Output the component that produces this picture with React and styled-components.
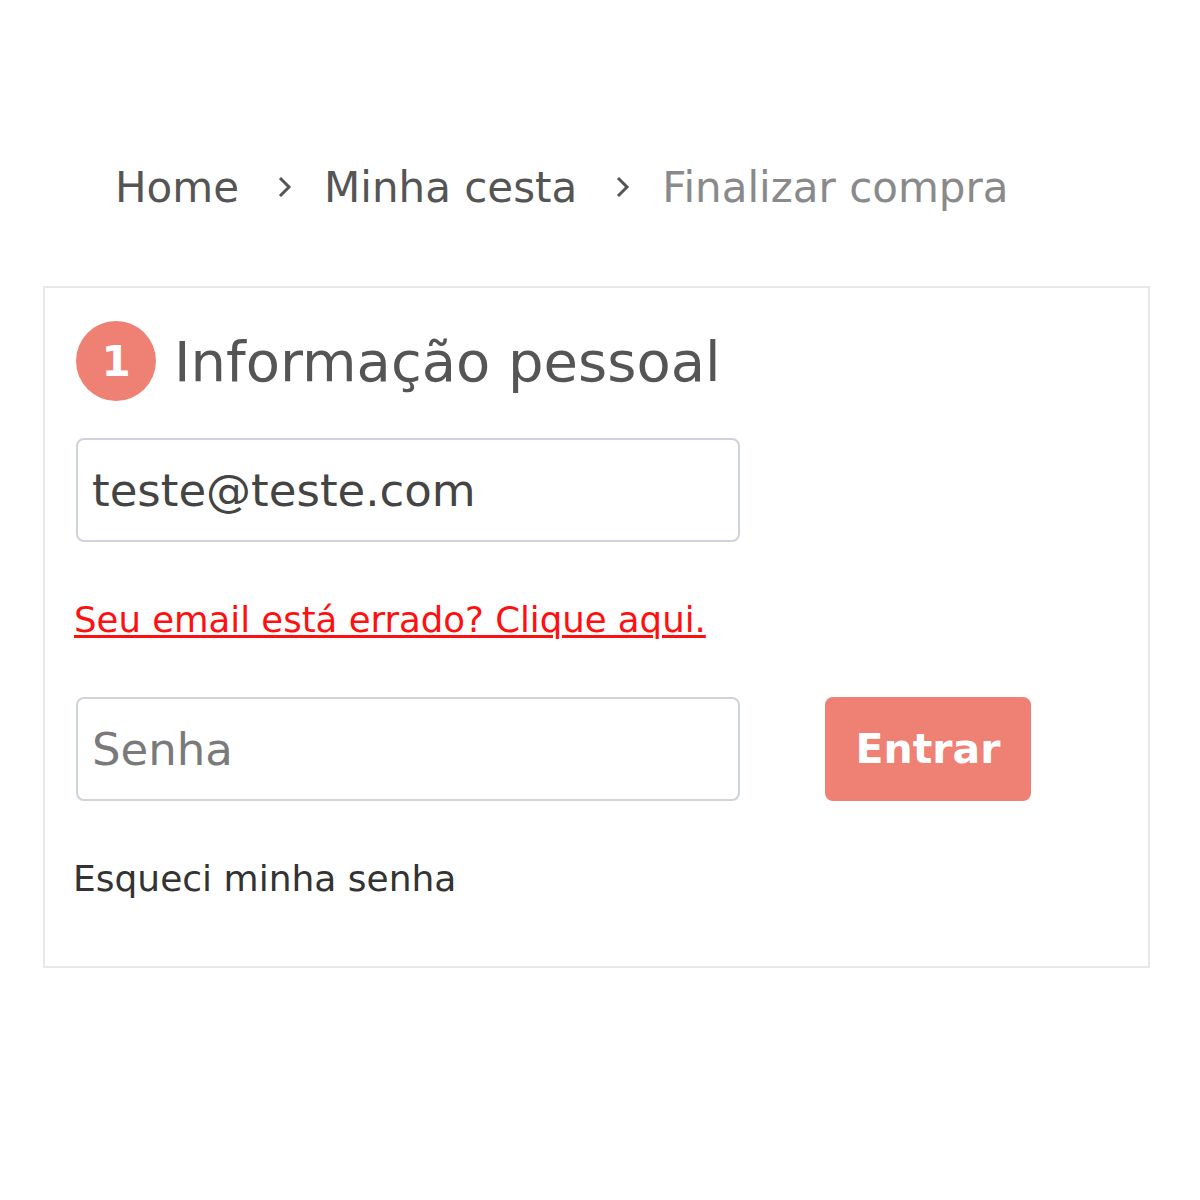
import styled, { createGlobalStyle } from "styled-components"

const GlobalStyle = createGlobalStyle`
        body {
                margin: 0;
                background: #fff;
                font-family: "DejaVu Sans", "Noto Sans", sans-serif;
        }
`

const Page = styled.div`
        width: 1200px;
        padding-top: 160px;
`

const Breadcrumb = styled.nav`
        display: flex;
        align-items: center;
        padding-left: 115px;
        height: 54px;
        font-size: 42px;
        color: #555;
`

const Crumb = styled.span`
        color: ${props => props.current ? '#8a8a8a' : '#555'};
`

const Sep = styled.span`
        display: flex;
        align-items: center;
        margin: 0 31px 0 38px;
`

const Card = styled.section`
        margin: 72px 0 0 43px;
        width: 1107px;
        box-sizing: border-box;
        border: 2px solid #e8e8e8;
        padding: 33px 32px 65px 31px;
`

const TitleRow = styled.div`
        display: flex;
        align-items: center;
        gap: 18px;
`

const Step = styled.div`
        width: 80px;
        height: 80px;
        border-radius: 50%;
        background: #ef8074;
        color: #fff;
        display: flex;
        align-items: center;
        justify-content: center;
        font-size: 42px;
        font-weight: bold;
`

const Title = styled.h2`
        margin: 0;
        font-size: 56px;
        font-weight: 500;
        color: #555;
`

const Field = styled.input`
        width: 664px;
        height: 104px;
        box-sizing: border-box;
        border: 2px solid #cfd3da;
        border-radius: 8px;
        padding: 0 14px;
        font-family: inherit;
        font-size: 45px;
        color: #444;
        outline: none;
        &::placeholder {
                color: #7a7a7a;
        }
`

const EmailField = styled(Field)`
        margin-top: 37px;
        display: block;
`

const ErrorLink = styled.a`
        display: block;
        margin-top: 56px;
        margin-left: -2px;
        font-size: 35.5px;
        line-height: 44px;
        color: #ff1010;
        text-decoration: underline;
        text-decoration-thickness: 3px;
        text-underline-offset: 3px;
        cursor: pointer;
`

const LoginRow = styled.div`
        display: flex;
        gap: 85px;
        margin-top: 55px;
`

const Button = styled.button`
        width: 206px;
        height: 104px;
        border: none;
        border-radius: 8px;
        background: #ef8074;
        color: #fff;
        font-family: inherit;
        font-size: 41px;
        font-weight: bold;
        cursor: pointer;
`

const Forgot = styled.a`
        display: block;
        margin-top: 56px;
        margin-left: -3px;
        font-size: 36px;
        line-height: 44px;
        color: #333;
        cursor: pointer;
`

const Chevron = () => (
        <svg width="16" height="28" viewBox="0 0 16 28" fill="none" stroke="#555" strokeWidth="3">
                <path d="M3 5 L12 14 L3 23" />
        </svg>
)

const App = () => {
        return (
                <Page>
                        <GlobalStyle />
                        <Breadcrumb>
                                <Crumb>Home</Crumb>
                                <Sep><Chevron /></Sep>
                                <Crumb>Minha cesta</Crumb>
                                <Sep><Chevron /></Sep>
                                <Crumb current>Finalizar compra</Crumb>
                        </Breadcrumb>
                        <Card>
                                <TitleRow>
                                        <Step>1</Step>
                                        <Title>Informação pessoal</Title>
                                </TitleRow>
                                <EmailField type="email" defaultValue="teste@teste.com" />
                                <ErrorLink>Seu email está errado? Clique aqui.</ErrorLink>
                                <LoginRow>
                                        <Field type="password" placeholder="Senha" />
                                        <Button>Entrar</Button>
                                </LoginRow>
                                <Forgot>Esqueci minha senha</Forgot>
                        </Card>
                </Page>
        )
}

export default App
